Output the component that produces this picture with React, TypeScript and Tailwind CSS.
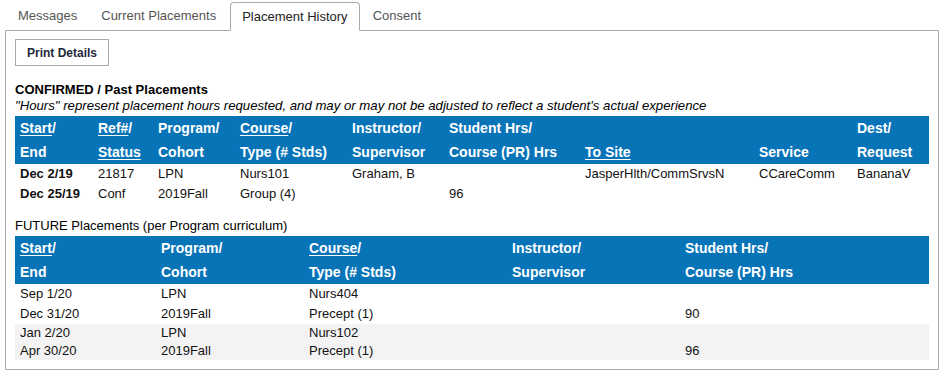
import React from "react";

const font = { fontFamily: "'Liberation Sans', Arial, sans-serif" };

function U({ children }: { children: React.ReactNode }) {
  return <span className="underline underline-offset-[2px]">{children}</span>;
}

export default function App() {
  const cw1 = [78, 60, 82, 112, 97, 136, 174, 98, 77];
  const cw2 = [141, 148, 203, 173, 249];
  const th = "text-left font-bold text-white text-[14px] leading-[16px] pl-[5px] h-[24px] align-middle whitespace-nowrap";
  const td = "pl-[5px] h-[20px] leading-[16px] align-middle whitespace-nowrap text-[13px] text-[#111]";
  const td2 = "pl-[5px] h-[18px] leading-[16px] align-middle whitespace-nowrap text-[13px] text-[#111]";
  return (
    <div className="w-[946px] h-[377px] bg-white px-[5px] pt-[2px]" style={font}>
      <div className="flex pl-[2px] gap-[2px] text-[13px] text-[#555]">
        <div className="px-[10px] h-[28px] flex items-center border border-transparent">Messages</div>
        <div className="px-[10px] h-[28px] flex items-center border border-transparent">Current Placements</div>
        <div className="ml-[1px] px-[11px] h-[29px] flex items-center border border-[#aaaaaa] border-b-white rounded-t-[4px] bg-white text-[#222] -mb-px relative z-10">
          Placement History
        </div>
        <div className="px-[10px] h-[28px] flex items-center border border-transparent">Consent</div>
      </div>
      <div className="w-[934px] border border-[#aaaaaa] pt-[8px] pl-[9px] pr-[8px] pb-[9px]">
        <button className="w-[94px] h-[27px] border border-[#aaaaaa] bg-white text-[12px] font-bold text-[#1e2a3c]">
          Print Details
        </button>
        <div className="mt-[16px] text-[13px] font-bold text-black leading-[16px]">CONFIRMED / Past Placements</div>
        <div className="text-[13.2px] italic text-black leading-[15px] mb-[3px]">
          "Hours" represent placement hours requested, and may or may not be adjusted to reflect a student's actual experience
        </div>
        <table className="w-[914px] table-fixed border-collapse">
          <colgroup>
            {cw1.map((w, i) => (
              <col key={i} style={{ width: w }} />
            ))}
          </colgroup>
          <thead className="bg-[#0874b8]">
            <tr>
              <th className={th}><U>Start</U>/</th>
              <th className={th}><U>Ref#</U>/</th>
              <th className={th}>Program/</th>
              <th className={th}><U>Course</U>/</th>
              <th className={th}>Instructor/</th>
              <th className={th}>Student Hrs/</th>
              <th className={th}></th>
              <th className={th}></th>
              <th className={th}>Dest/</th>
            </tr>
            <tr>
              <th className={th}>End</th>
              <th className={th}><U>Status</U></th>
              <th className={th}>Cohort</th>
              <th className={th}>Type (# Stds)</th>
              <th className={th}>Supervisor</th>
              <th className={th}>Course (PR) Hrs</th>
              <th className={th}><U>To Site</U></th>
              <th className={th}>Service</th>
              <th className={th}>Request</th>
            </tr>
          </thead>
          <tbody>
            <tr>
              <td className={td + " font-bold"}>Dec 2/19</td>
              <td className={td}>21817</td>
              <td className={td}>LPN</td>
              <td className={td}>Nurs101</td>
              <td className={td}>Graham, B</td>
              <td className={td}></td>
              <td className={td}>JasperHlth/CommSrvsN</td>
              <td className={td}>CCareComm</td>
              <td className={td}>BananaV</td>
            </tr>
            <tr>
              <td className={td + " font-bold"}>Dec 25/19</td>
              <td className={td}>Conf</td>
              <td className={td}>2019Fall</td>
              <td className={td}>Group (4)</td>
              <td className={td}></td>
              <td className={td}>96</td>
              <td className={td}></td>
              <td className={td}></td>
              <td className={td}></td>
            </tr>
          </tbody>
        </table>
        <div className="mt-[14px] mb-[2px] text-[13px] text-black leading-[16px]">FUTURE Placements (per Program curriculum)</div>
        <table className="w-[914px] table-fixed border-collapse">
          <colgroup>
            {cw2.map((w, i) => (
              <col key={i} style={{ width: w }} />
            ))}
          </colgroup>
          <thead className="bg-[#0874b8]">
            <tr>
              <th className={th}><U>Start</U>/</th>
              <th className={th}>Program/</th>
              <th className={th}><U>Course</U>/</th>
              <th className={th}>Instructor/</th>
              <th className={th}>Student Hrs/</th>
            </tr>
            <tr>
              <th className={th}>End</th>
              <th className={th}>Cohort</th>
              <th className={th}>Type (# Stds)</th>
              <th className={th}>Supervisor</th>
              <th className={th}>Course (PR) Hrs</th>
            </tr>
          </thead>
          <tbody>
            <tr>
              <td className={td}>Sep 1/20</td>
              <td className={td}>LPN</td>
              <td className={td}>Nurs404</td>
              <td className={td}></td>
              <td className={td}></td>
            </tr>
            <tr>
              <td className={td}>Dec 31/20</td>
              <td className={td}>2019Fall</td>
              <td className={td}>Precept (1)</td>
              <td className={td}></td>
              <td className={td}>90</td>
            </tr>
            <tr className="bg-[#f3f3f3]">
              <td className={td2}>Jan 2/20</td>
              <td className={td2}>LPN</td>
              <td className={td2}>Nurs102</td>
              <td className={td2}></td>
              <td className={td2}></td>
            </tr>
            <tr className="bg-[#f3f3f3]">
              <td className={td2}>Apr 30/20</td>
              <td className={td2}>2019Fall</td>
              <td className={td2}>Precept (1)</td>
              <td className={td2}></td>
              <td className={td2}>96</td>
            </tr>
          </tbody>
        </table>
      </div>
    </div>
  );
}
